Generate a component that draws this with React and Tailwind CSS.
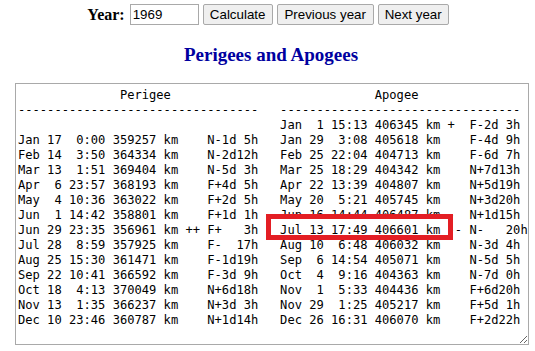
const perigees = [
    "Jan 17  0:00 359257 km    N-1d 5h",
    "Feb 14  3:50 364334 km    N-2d12h",
    "Mar 13  1:51 369404 km    N-5d 3h",
    "Apr  6 23:57 368193 km    F+4d 5h",
    "May  4 10:36 363022 km    F+2d 5h",
    "Jun  1 14:42 358801 km    F+1d 1h",
    "Jun 29 23:35 356961 km ++ F+   3h",
    "Jul 28  8:59 357925 km    F-  17h",
    "Aug 25 15:30 361471 km    F-1d19h",
    "Sep 22 10:41 366592 km    F-3d 9h",
    "Oct 18  4:13 370049 km    N+6d18h",
    "Nov 13  1:35 366237 km    N+3d 3h",
    "Dec 10 23:46 360787 km    N+1d14h",
];

const apogees = [
    "Jan  1 15:13 406345 km +  F-2d 3h",
    "Jan 29  3:08 405618 km    F-4d 9h",
    "Feb 25 22:04 404713 km    F-6d 7h",
    "Mar 25 18:29 404342 km    N+7d13h",
    "Apr 22 13:39 404807 km    N+5d19h",
    "May 20  5:21 405745 km    N+3d20h",
    "Jun 16 14:44 406487 km -  N+1d15h",
    "Jul 13 17:49 406601 km -- N-   20h",
    "Aug 10  6:48 406032 km    N-3d 4h",
    "Sep  6 14:54 405071 km    N-5d 5h",
    "Oct  4  9:16 404363 km    N-7d 0h",
    "Nov  1  5:33 404436 km    F+6d20h",
    "Nov 29  1:25 405217 km    F+5d 1h",
    "Dec 26 16:31 406070 km    F+2d22h",
];

const sep = "   ";
const blank = " ".repeat(33);

const lines = [
    " ".repeat(14) + "Perigee" + " ".repeat(28) + "Apogee",
    "-".repeat(33) + sep + "-".repeat(33),
    blank + sep + apogees[0],
    ...perigees.map((p, i) => p + sep + apogees[i + 1]),
];

const table = lines.join("\n");

const btn =
    "h-[21px] px-[4px] whitespace-nowrap bg-[#efefef] border border-[#a9a9a9] rounded-[2px] text-[13.33px] leading-[19px] text-black font-['Liberation_Sans',Arial,sans-serif]";

export default function App() {
    return (
        <div className="w-[535px] h-[351px] bg-white overflow-hidden">
            {/* Year controls */}
            <div className="flex items-center justify-center gap-[4px] h-[21px] mt-[4px] pl-[1px]">
                <span className="font-['Liberation_Serif',serif] font-bold text-[16px] leading-[21px] mr-[1px]">
                    Year:
                </span>
                <input
                    className="w-[69px] h-[21px] border border-[#a9a9a9] px-[2px] text-[13.33px] font-['Liberation_Sans',Arial,sans-serif] outline-none"
                    defaultValue="1969"
                />
                <button className={btn + " w-[70px]"}>Calculate</button>
                <button className={btn + " w-[97px]"}>Previous year</button>
                <button className={btn + " w-[71px]"}>Next year</button>
            </div>

            <h3 className="mt-[19px] text-center font-['Liberation_Serif',serif] font-bold text-[19px] leading-[22px] text-[#0000a0] pl-[7px]">
                Perigees and Apogees
            </h3>

            {/* Table */}
            <div className="relative ml-[15px] mt-[17px] w-[514px]">
                <textarea
                    readOnly
                    wrap="off"
                    value={table}
                    className="block w-[514px] h-[262px] border border-[#a9a9a9] pl-[2px] pr-0 pt-[4px] font-['DejaVu_Sans_Mono',monospace] text-[12.1px] leading-[15px] text-black whitespace-pre overflow-hidden outline-none"
                />
                <div className="absolute left-[251px] top-[131px] w-[187px] h-[26px] border-[5px] border-[#e31e24] pointer-events-none" />
            </div>
        </div>
    );
}
